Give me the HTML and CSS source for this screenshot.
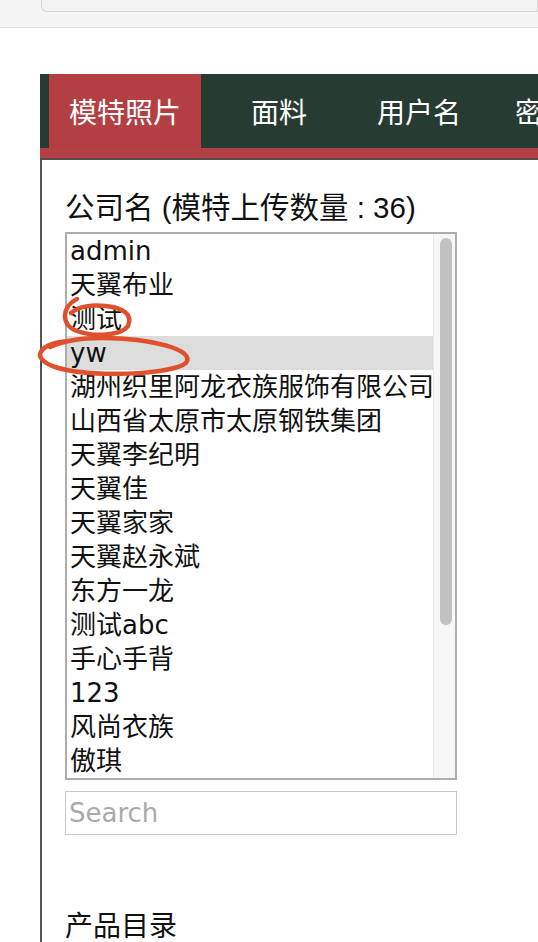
FILE: index.html
```html
<!DOCTYPE html>
<html>
<head>
  <meta charset="UTF-8">
  <title>模特照片</title>
  <link rel="stylesheet" href="styles.css">
</head>
<body>
  <div class="topbar">
    <div class="topbar-field"></div>
  </div>
  <div class="main">
    <ul class="tabs">
      <li class="active">模特照片</li>
      <li>面料</li>
      <li>用户名</li>
      <li class="last">密码</li>
    </ul>
    <div class="panel">
      <div class="field-label">公司名 (模特上传数量 : 36)</div>
      <div class="listbox">
        <ul class="options">
          <li>admin</li>
          <li>天翼布业</li>
          <li>测试</li>
          <li class="selected">yw</li>
          <li>湖州织里阿龙衣族服饰有限公司</li>
          <li>山西省太原市太原钢铁集团</li>
          <li>天翼李纪明</li>
          <li>天翼佳</li>
          <li>天翼家家</li>
          <li>天翼赵永斌</li>
          <li>东方一龙</li>
          <li>测试abc</li>
          <li>手心手背</li>
          <li>123</li>
          <li>风尚衣族</li>
          <li>傲琪</li>
          <li>天翼</li>
        </ul>
        <div class="scrollbar">
          <div class="scrollbar-thumb"></div>
        </div>
      </div>
      <input class="search" type="text" placeholder="Search">
      <h3 class="section-title">产品目录</h3>
    </div>
  </div>
  <svg class="marks" width="538" height="942" viewBox="0 0 538 942">
    <path d="M 77 299 C 62 306, 60 325, 77 331 C 94 337, 121 336, 128 326 C 133 314, 123 308, 106 306 C 93 305, 81 305, 71 313" />
    <path d="M 70 341 C 39 343, 29 358, 55 367 C 90 378, 170 375, 186 363 C 196 350, 152 338, 102 338 C 82 338, 63 341, 50 347" />
  </svg>
</body>
</html>
```

FILE: styles.css
```css
html, body {
  margin: 0;
  padding: 0;
  overflow: hidden;
  background: #fff;
  height: 942px;
}
body {
  font-family: "Noto Sans CJK SC", sans-serif;
  color: #111;
}
.topbar {
  height: 27px;
  background: #f4f4f4;
  border-bottom: 1px solid #d9d9d9;
}
.topbar-field {
  margin-left: 41px;
  height: 11px;
  border: 1px solid #d6d6d6;
  border-top: none;
  border-radius: 0 0 0 6px;
  background: #f3f3f3;
}
.main {
  margin: 46px 0 0 40px;
}
.tabs {
  list-style: none;
  margin: 0;
  padding: 0 0 0 9px;
  display: flex;
  height: 74px;
  overflow: hidden;
  background: #263c33;
  border-bottom: 10px solid #b44045;
}
.tabs li {
  flex: none;
  padding: 0 20px;
  line-height: 74px;
  font-size: 28px;
  color: #fff;
  white-space: nowrap;
}
.tabs li + li {
  margin-left: 30px;
}
.tabs li.last {
  margin-left: 14px;
}
.tabs li.active {
  background: #b33f43;
}
.panel {
  border-top: 2px solid #5a4a4a;
  border-left: 2px solid #555;
  padding: 31px 0 0 23px;
  height: 751px;
}
.field-label {
  font-family: "Liberation Sans", "Noto Sans CJK SC", sans-serif;
  font-size: 29.5px;
  line-height: 34px;
  margin-bottom: 7px;
  white-space: nowrap;
}
.listbox {
  display: flex;
  width: 388px;
  height: 544px;
  border: 2px solid #adadad;
  overflow: hidden;
}
.options {
  list-style: none;
  margin: 0;
  padding: 0;
  flex: 1;
  overflow: hidden;
}
.options li {
  font-family: "DejaVu Sans", "Noto Sans CJK SC", sans-serif;
  font-size: 26px;
  line-height: 34px;
  height: 34px;
  padding-left: 3px;
  white-space: nowrap;
  color: #111;
}
.options li.selected {
  background: #dcdcdc;
}
.scrollbar {
  width: 21px;
  background: #f7f7f7;
  border-left: 1px solid #e6e6e6;
}
.scrollbar-thumb {
  width: 12px;
  height: 387px;
  margin: 4px 0 0 6px;
  background: #c1c1c1;
  border-radius: 6px;
}
.search {
  display: block;
  box-sizing: border-box;
  width: 392px;
  height: 44px;
  margin-top: 11px;
  border: 1px solid #c8c8c8;
  padding: 0 3px;
  font-family: "DejaVu Sans", sans-serif;
  font-size: 26px;
  color: #111;
  outline: none;
}
.search::placeholder {
  color: #aaa;
}
.section-title {
  margin: 72px 0 0 0;
  font-size: 28px;
  line-height: 34px;
  font-weight: normal;
}
.marks {
  position: absolute;
  left: 0;
  top: 0;
  fill: none;
  stroke: #e0502c;
  stroke-width: 4.5;
  stroke-linecap: round;
  pointer-events: none;
}
```
